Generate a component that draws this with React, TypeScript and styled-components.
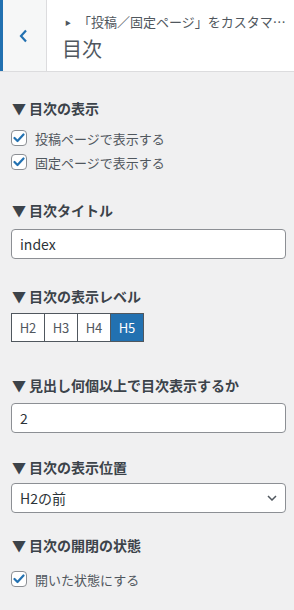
import styled, { createGlobalStyle } from "styled-components";

const GlobalStyle = createGlobalStyle`
  html, body {
    margin: 0;
    padding: 0;
    background: #f0f0f1;
  }
  body {
    font-family: "Noto Sans CJK JP", "Noto Sans", sans-serif;
    color: #3c434a;
  }
  * {
    box-sizing: border-box;
  }
`;

const Panel = styled.div`
  width: 294px;
  min-height: 610px;
  background: #f0f0f1;
`;

const Header = styled.div`
  display: flex;
  height: 72px;
  background: #fff;
  border-bottom: 1px solid #dcdcde;
`;

const BackButton = styled.button`
  flex: none;
  width: 47px;
  height: 100%;
  padding: 0 0 0 16px;
  display: flex;
  align-items: center;
  background: #f6f7f7;
  border: none;
  border-left: 3px solid #2271b1;
  border-right: 1px solid #dcdcde;
  color: #2271b1;
  cursor: pointer;
`;

const HeaderText = styled.div`
  flex: 1;
  min-width: 0;
  padding: 13px 6px 0 15px;
  color: #50575e;
`;

const Crumb = styled.div`
  font-size: 13px;
  line-height: 18px;
  white-space: nowrap;
`;

const Caret = styled.span`
  display: inline-block;
  width: 16px;
  padding-left: 3px;
  font-size: 6px;
  vertical-align: 2px;
`;

const Title = styled.h1`
  margin: 4px 0 0;
  font-size: 20px;
  font-weight: 400;
  line-height: 26px;
`;

const Content = styled.div`
  padding: 0 8px 20px 11px;
`;

const Section = styled.section<{ $top: number }>`
  padding-top: ${(p) => p.$top}px;
`;

const Heading = styled.h3<{ $gap?: number }>`
  margin: 0 0 ${(p) => p.$gap ?? 8}px;
  font-size: 14px;
  font-weight: 700;
  line-height: 20px;
  color: #3c434a;
`;

const Mark = styled.span`
  margin-right: 3px;
  padding-left: 1px;
`;

const CheckRow = styled.label`
  display: flex;
  align-items: center;
  gap: 8px;
  height: 24px;
  font-size: 13px;
  color: #50575e;
`;

const Box = styled.span`
  flex: none;
  width: 16px;
  height: 16px;
  display: flex;
  align-items: center;
  justify-content: center;
  background: #fff;
  border: 1px solid #8c8f94;
  border-radius: 4px;
`;

const TextField = styled.input`
  display: block;
  width: 100%;
  height: 30px;
  padding: 0 8px;
  font-family: inherit;
  font-size: 14px;
  color: #2c3338;
  background: #fff;
  border: 1px solid #8c8f94;
  border-radius: 4px;
  outline: none;
`;

const Segments = styled.div`
  display: inline-flex;
  border: 1px solid #50575e;
  background: #fff;
`;

const Seg = styled.button<{ $active?: boolean }>`
  width: 33px;
  height: 27px;
  padding: 0;
  font-family: inherit;
  font-size: 13px;
  color: ${(p) => (p.$active ? "#fff" : "#50575e")};
  background: ${(p) => (p.$active ? "#2271b1" : "#fff")};
  border: none;
  border-left: 1px solid #50575e;
  &:first-child {
    width: 32px;
    border-left: none;
  }
`;

const SelectWrap = styled.div`
  position: relative;
`;

const Select = styled.select`
  display: block;
  width: 100%;
  height: 30px;
  padding: 0 24px 0 8px;
  font-family: inherit;
  font-size: 14px;
  color: #2c3338;
  background: #fff;
  border: 1px solid #8c8f94;
  border-radius: 4px;
  appearance: none;
  outline: none;
`;

const SelectArrow = styled.svg`
  position: absolute;
  right: 9px;
  top: 12px;
  pointer-events: none;
`;

function Check() {
  return (
    <Box>
      <svg width="12" height="10" viewBox="0 0 12 10">
        <polyline
          points="1.5,5 4.5,8 10.5,1.5"
          fill="none"
          stroke="#2271b1"
          strokeWidth="2.2"
          strokeLinecap="round"
          strokeLinejoin="round"
        />
      </svg>
    </Box>
  );
}

function SectionTitle({ children, gap }: { children: string; gap?: number }) {
  return (
    <Heading $gap={gap}>
      <Mark>▼</Mark>
      {children}
    </Heading>
  );
}

export default function App() {
  const levels = ["H2", "H3", "H4", "H5"];
  return (
    <>
      <GlobalStyle />
      <Panel>
        <Header>
          <BackButton aria-label="戻る">
            <svg width="9" height="14" viewBox="0 0 9 14">
              <polyline
                points="7,1.5 2,7 7,12.5"
                fill="none"
                stroke="#2271b1"
                strokeWidth="2.2"
              />
            </svg>
          </BackButton>
          <HeaderText>
            <Crumb>
              <Caret>▶</Caret>「投稿／固定ページ」をカスタマ…
            </Crumb>
            <Title>目次</Title>
          </HeaderText>
        </Header>
        <Content>
          <Section $top={26}>
            <SectionTitle>目次の表示</SectionTitle>
            <CheckRow>
              <Check />
              投稿ページで表示する
            </CheckRow>
            <CheckRow>
              <Check />
              固定ページで表示する
            </CheckRow>
          </Section>
          <Section $top={26}>
            <SectionTitle gap={9}>目次タイトル</SectionTitle>
            <TextField defaultValue="index" />
          </Section>
          <Section $top={27}>
            <SectionTitle gap={7}>目次の表示レベル</SectionTitle>
            <Segments>
              {levels.map((l) => (
                <Seg key={l} $active={l === "H5"}>
                  {l}
                </Seg>
              ))}
            </Segments>
          </Section>
          <Section $top={33}>
            <SectionTitle>見出し何個以上で目次表示するか</SectionTitle>
            <TextField defaultValue="2" />
          </Section>
          <Section $top={24}>
            <SectionTitle gap={6}>目次の表示位置</SectionTitle>
            <SelectWrap>
              <Select defaultValue="before">
                <option value="before">H2の前</option>
                <option value="after">H2の後</option>
              </Select>
              <SelectArrow width="10" height="6" viewBox="0 0 10 6">
                <polyline
                  points="1,1 5,5 9,1"
                  fill="none"
                  stroke="#50575e"
                  strokeWidth="1.5"
                />
              </SelectArrow>
            </SelectWrap>
          </Section>
          <Section $top={22}>
            <SectionTitle gap={12}>目次の開閉の状態</SectionTitle>
            <CheckRow>
              <Check />
              開いた状態にする
            </CheckRow>
          </Section>
        </Content>
      </Panel>
    </>
  );
}
